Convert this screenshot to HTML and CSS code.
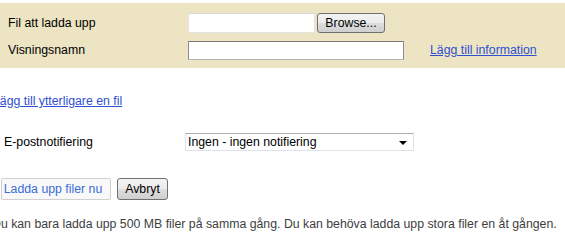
FILE: index.html
```html
<!DOCTYPE html>
<html lang="sv">
<head>
    <meta charset="UTF-8">
    <title>Ladda upp filer</title>
    <link rel="stylesheet" href="styles.css">
</head>
<body>
<div class="panel">
    <div class="rad">
        <span class="etikett">Fil att ladda upp</span>
        <div class="fil">
            <input type="text" class="filnamn">
            <button class="browse">Browse...</button>
        </div>
    </div>
    <div class="rad">
        <span class="etikett">Visningsnamn</span>
        <div class="fil">
            <input type="text" class="namn">
            <a href="#" class="info">Lägg till information</a>
        </div>
    </div>
</div>

<a href="#" class="mer">Lägg till ytterligare en fil</a>

<div class="notis">
    <span class="etikett">E-postnotifiering</span>
    <div class="val">
        <select>
            <option>Ingen - ingen notifiering</option>
        </select>
    </div>
</div>

<div class="knappar">
    <button class="ladda">Ladda upp filer nu</button>
    <button class="avbryt">Avbryt</button>
</div>

<p class="hjalp">Du kan bara ladda upp 500 MB filer på samma gång. Du kan behöva ladda upp stora filer en åt gången.</p>
</body>
</html>
```

FILE: styles.css
```css
body { margin: 0; font-family: "Liberation Sans", Arial, sans-serif; font-size: 12.3px; color: #000; background: #fff; overflow: hidden; }
a { color: #2f4fd2; }
.panel { background: #ece4c2; margin-top: 3px; padding: 10px 0 8px 8px; display: grid; row-gap: 7px; }
.rad { display: grid; grid-template-columns: 180px auto; align-items: center; height: 20px; }
.fil { display: flex; align-items: center; }
.filnamn { width: 127px; height: 20px; box-sizing: border-box; border: 1px solid #e4e4e4; border-top-color: #d8d8d8; margin: 0; padding: 0 3px; }
.browse { margin-left: 2px; width: 68px; height: 20px; box-sizing: border-box; border: 1px solid #707070; border-radius: 3px; background: linear-gradient(#f3f3f3, #ebebeb 50%, #dddddd 51%, #cfcfcf); font: inherit; color: #000; padding: 0; }
.namn { width: 216px; height: 19px; box-sizing: border-box; border: 1px solid #8c8c8c; border-top-color: #7a7a7a; border-bottom-color: #b5b5b5; margin: 0; padding: 0 3px; }
.info { margin-left: 26px; }
.mer { display: block; margin: 26px 0 0 -7px; line-height: 14px; }
.notis { display: grid; grid-template-columns: 181px auto; align-items: center; padding-left: 4px; margin-top: 25px; height: 18px; }
.val { position: relative; width: 229px; }
.val select { appearance: none; -webkit-appearance: none; width: 229px; height: 18px; box-sizing: border-box; border: 1px solid #dde3ea; border-top-color: #abadb3; background: #fff; font: inherit; color: #000; padding: 0 0 0 2px; margin: 0; border-radius: 0; }
.val::after { content: ""; position: absolute; right: 7px; top: 8px; border-left: 4px solid transparent; border-right: 4px solid transparent; border-top: 4px solid #000; pointer-events: none; }
.knappar { display: flex; gap: 6px; margin-top: 27px; padding-left: 1px; }
.ladda { width: 110px; height: 22px; box-sizing: border-box; border: 1px solid #d0d0d0; border-radius: 2px; background: #f9f9f9; color: #3a6dd6; font: inherit; padding: 0 6px 0 0; }
.avbryt { width: 51px; height: 22px; box-sizing: border-box; border: 1px solid #707070; border-radius: 3px; background: linear-gradient(#f3f3f3, #ebebeb 50%, #dddddd 51%, #cfcfcf); color: #000; font: inherit; padding: 0; }
.hjalp { margin: 17px 0 0 -8px; color: #3e3e3e; white-space: nowrap; line-height: 14px; }
```
